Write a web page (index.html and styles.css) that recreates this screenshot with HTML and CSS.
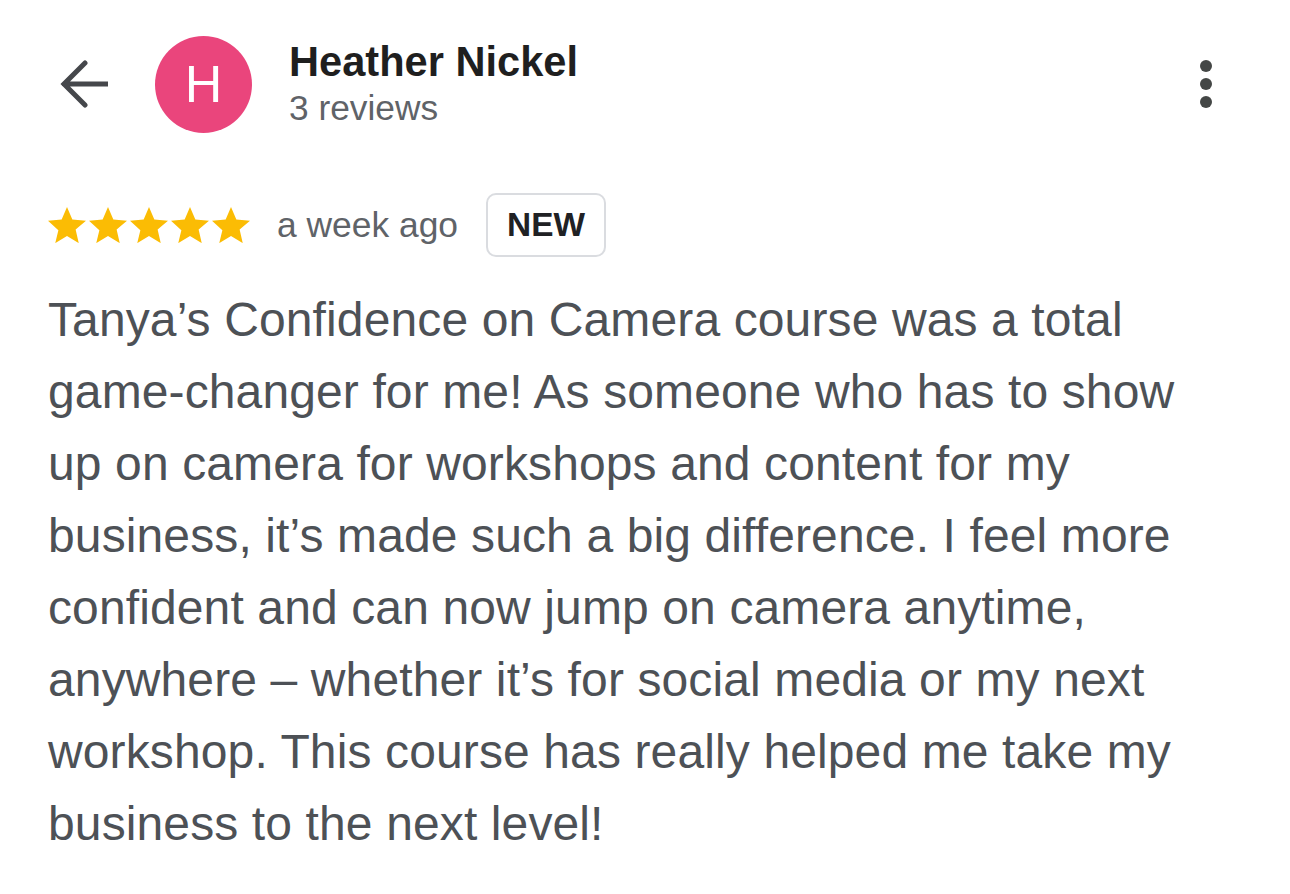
FILE: index.html
```html
<!DOCTYPE html>
<html lang="en">
<head>
<meta charset="utf-8">
<title>Heather Nickel review</title>
<link rel="stylesheet" href="styles.css">
</head>
<body>
<div class="page">
  <header class="header">
    <button class="back" aria-label="Back">
      <svg viewBox="0 0 48 48" width="48" height="48"><path d="M48 24H4M25 3L4 24l21 21" fill="none" stroke="#45474b" stroke-width="5" stroke-linecap="round" stroke-linejoin="miter"/></svg>
    </button>
    <div class="avatar">H</div>
    <div class="info">
      <div class="name">Heather Nickel</div>
      <div class="count">3 reviews</div>
    </div>
    <button class="more" aria-label="More options">
      <svg viewBox="0 0 12 48" width="12" height="48"><circle cx="6" cy="6" r="6" fill="#444746"/><circle cx="6" cy="24" r="6" fill="#444746"/><circle cx="6" cy="42" r="6" fill="#444746"/></svg>
    </button>
  </header>

  <div class="meta">
    <div class="stars">
      <svg class="star" viewBox="2 2 20 19.2"><path d="M12 17.27L18.18 21l-1.64-7.19L22 9.24l-7.19-.61L12 2 9.19 8.63 2 9.24l5.46 5.05L5.82 21z"/></svg>
      <svg class="star" viewBox="2 2 20 19.2"><path d="M12 17.27L18.18 21l-1.64-7.19L22 9.24l-7.19-.61L12 2 9.19 8.63 2 9.24l5.46 5.05L5.82 21z"/></svg>
      <svg class="star" viewBox="2 2 20 19.2"><path d="M12 17.27L18.18 21l-1.64-7.19L22 9.24l-7.19-.61L12 2 9.19 8.63 2 9.24l5.46 5.05L5.82 21z"/></svg>
      <svg class="star" viewBox="2 2 20 19.2"><path d="M12 17.27L18.18 21l-1.64-7.19L22 9.24l-7.19-.61L12 2 9.19 8.63 2 9.24l5.46 5.05L5.82 21z"/></svg>
      <svg class="star" viewBox="2 2 20 19.2"><path d="M12 17.27L18.18 21l-1.64-7.19L22 9.24l-7.19-.61L12 2 9.19 8.63 2 9.24l5.46 5.05L5.82 21z"/></svg>
    </div>
    <span class="when">a week ago</span>
    <span class="badge">NEW</span>
  </div>

  <p class="text">Tanya’s Confidence on Camera course was a total game-changer for me! As someone who has to show up on camera for workshops and content for my business, it’s made such a big difference. I feel more confident and can now jump on camera anytime, anywhere – whether it’s for social media or my next workshop. This course has really helped me take my business to the next level!</p>
</div>
</body>
</html>
```

FILE: styles.css
```css
html, body {
  margin: 0;
  padding: 0;
  background: #ffffff;
}

body {
  font-family: "Liberation Sans", Arial, Helvetica, sans-serif;
  width: 1290px;
  height: 894px;
  overflow: hidden;
}

.page {
  padding: 36px 62px 0 48px;
}

.header {
  display: flex;
  align-items: center;
  height: 96px;
}

.back,
.more {
  background: none;
  border: 0;
  padding: 0;
  margin: 0;
  display: flex;
  align-items: center;
  justify-content: center;
}

.back {
  width: 48px;
  height: 48px;
  margin-left: 12px;
  margin-right: 47px;
}

.avatar {
  width: 97px;
  height: 97px;
  border-radius: 50%;
  background: #ea457c;
  color: #ffffff;
  font-size: 52px;
  line-height: 97px;
  text-align: center;
  flex: none;
  margin-right: 37px;
}

.info {
  display: flex;
  flex-direction: column;
}

.name {
  font-size: 41.6px;
  font-weight: 700;
  line-height: 48px;
  color: #1f1f1f;
}

.count {
  font-size: 35.3px;
  line-height: 44px;
  color: #5f6368;
}

.more {
  margin-left: auto;
  width: 12px;
  height: 48px;
  margin-right: 16px;
}

.meta {
  display: flex;
  align-items: center;
  margin-top: 61px;
  height: 64px;
}

.stars {
  display: flex;
  gap: 3px;
  margin-right: 27px;
}

.star {
  width: 38px;
  height: 36.5px;
  fill: #fbbc04;
  display: block;
}

.when {
  font-size: 35.4px;
  color: #5f6368;
  margin-right: 28px;
}

.badge {
  box-sizing: border-box;
  height: 64px;
  display: flex;
  align-items: center;
  padding: 0 19px;
  border: 2px solid #dadce0;
  border-radius: 10px;
  font-size: 33.4px;
  font-weight: 700;
  color: #202124;
}

.text {
  margin: 27px 0 0 0;
  font-size: 48px;
  line-height: 72px;
  letter-spacing: 0.12px;
  color: #4d5156;
}
```
